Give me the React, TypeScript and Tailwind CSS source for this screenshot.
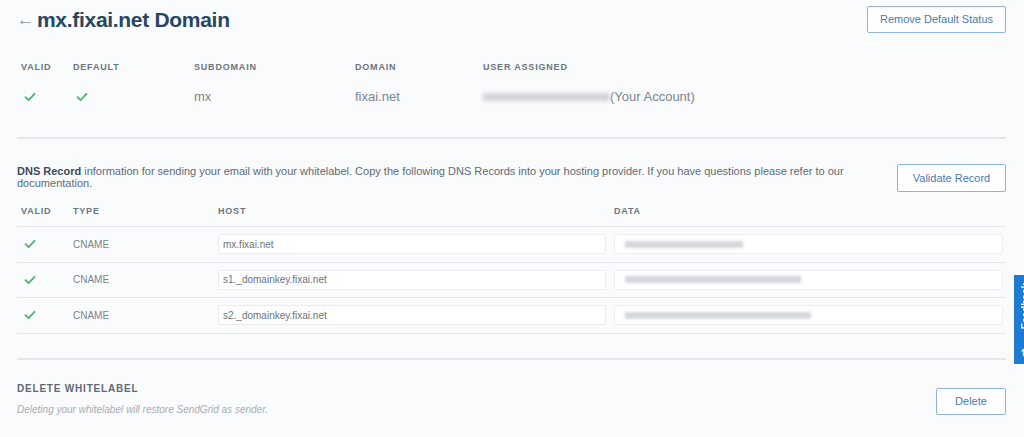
import React from 'react'

const font = { fontFamily: '"Liberation Sans", Arial, sans-serif' }

function Check() {
    return (
        <svg width="12" height="10" viewBox="0 0 12 10" fill="none" stroke="#4eb370" strokeWidth="1.8" strokeLinecap="round" strokeLinejoin="round">
            <path d="M1.5 5.2 4.6 8.2 10.5 1.8" />
        </svg>
    )
}

function OutlineButton({ label, className }: { label: string; className: string }) {
    return (
        <button className={`flex items-center justify-center rounded-[2px] border border-[#8fb3d9] bg-white text-[11px] text-[#4a7ab0] ${className}`}>
            {label}
        </button>
    )
}

const records = [
    { host: 'mx.fixai.net', blur: 'w-[118px]' },
    { host: 's1._domainkey.fixai.net', blur: 'w-[176px]' },
    { host: 's2._domainkey.fixai.net', blur: 'w-[186px]' },
]

export default function App() {
    return (
        <div className="relative min-h-screen overflow-hidden bg-[#fafbfc] text-[#5e6a77]" style={font}>
            <div className="pl-[17px] pr-[18px]">
                {/* header */}
                <div className="flex items-start justify-between pt-[6px]">
                    <div className="-mt-[2px] flex items-center">
                        <span className="mr-[3px] text-[17px] font-bold text-[#8a939c]">←</span>
                        <h1 className="text-[21px] font-bold tracking-[-0.3px] text-[#294661]">mx.fixai.net Domain</h1>
                    </div>
                    <OutlineButton label="Remove Default Status" className="h-[27px] w-[139px]" />
                </div>

                {/* summary */}
                <div className="mt-[25px] grid grid-cols-[52px_121px_161px_128px_1fr] pl-[4px] text-[9px] font-bold tracking-[0.09em] text-[#6b7580]">
                    <div>VALID</div>
                    <div>DEFAULT</div>
                    <div>SUBDOMAIN</div>
                    <div>DOMAIN</div>
                    <div>USER ASSIGNED</div>
                </div>
                <div className="mt-[13px] grid h-[16px] grid-cols-[52px_121px_161px_128px_1fr] items-center pl-[4px] text-[13px] text-[#7c848c]">
                    <div className="pl-[3px]"><Check /></div>
                    <div className="pl-[3px]"><Check /></div>
                    <div>mx</div>
                    <div>fixai.net</div>
                    <div className="flex items-center">
                        <span className="h-[8px] w-[127px] bg-[#cfd3d8] blur-[2px]" />
                        <span>(Your Account)</span>
                    </div>
                </div>

                <div className="mt-[34px] h-[2px] bg-[#e4e6e9]" />

                {/* dns */}
                <div className="mt-[26px] flex items-start justify-between">
                    <p className="w-[860px] text-[11px] leading-[12px] text-[#5e6a77]">
                        <span className="font-bold text-[#3c4b5a]">DNS Record</span> information for sending your email with your whitelabel. Copy the following DNS Records into your hosting provider. If you have questions please refer to our documentation.
                    </p>
                    <OutlineButton label="Validate Record" className="-mt-[1px] h-[28px] w-[109px]" />
                </div>

                <div className="mt-[13px] grid h-[21px] grid-cols-[52px_145px_396px_1fr] items-start pl-[4px] text-[9px] font-bold tracking-[0.09em] text-[#6b7580]">
                    <div>VALID</div>
                    <div>TYPE</div>
                    <div>HOST</div>
                    <div>DATA</div>
                </div>
                <div className="h-[1px] bg-[#e4e6e9]" />
                {records.map((r) => (
                    <div key={r.host} className="grid h-[35.5px] grid-cols-[52px_145px_396px_1fr] items-center border-b border-[#e4e6e9] pl-[4px]">
                        <div className="pl-[3px]"><Check /></div>
                        <div className="text-[10px] text-[#7c848c]">CNAME</div>
                        <div className="pr-[8px]">
                            <div className="flex h-[20px] items-center rounded-[2px] border border-[#e8eaed] bg-white px-[4px] text-[10px] text-[#6b737b]">{r.host}</div>
                        </div>
                        <div className="pr-[3px]">
                            <div className="flex h-[20px] items-center rounded-[2px] border border-[#eceef0] bg-white px-[10px]">
                                <span className={`h-[7px] bg-[#d3d6db] blur-[1.5px] ${r.blur}`} />
                            </div>
                        </div>
                    </div>
                ))}

                <div className="mt-[24px] h-[2px] bg-[#e4e6e9]" />

                {/* delete */}
                <div className="mt-[21px] flex items-start justify-between">
                    <div>
                        <div className="text-[10px] font-bold tracking-[0.08em] text-[#5e6a77]">DELETE WHITELABEL</div>
                        <div className="mt-[6px] text-[10px] italic text-[#a7adb4]">Deleting your whitelabel will restore SendGrid as sender.</div>
                    </div>
                    <OutlineButton label="Delete" className="mt-[7px] h-[27px] w-[70px]" />
                </div>
            </div>

            {/* feedback tab */}
            <div className="absolute left-[1014px] top-[275px] flex h-[89px] w-[22px] flex-col items-center justify-between bg-[#1f7ad1] py-[4px] text-white">
                <span className="mt-[4px] rotate-180 text-[10px] font-bold [writing-mode:vertical-rl]">Feedback</span>
                <span className="text-[9px] font-bold">⇅</span>
            </div>
        </div>
    )
}
